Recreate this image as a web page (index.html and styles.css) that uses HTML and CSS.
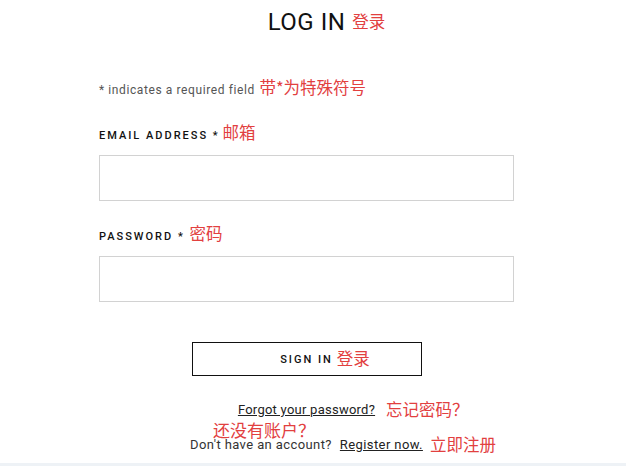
FILE: index.html
```html
<!DOCTYPE html>
<html lang="en">
<head>
    <meta charset="UTF-8">
    <meta name="viewport" content="width=device-width, initial-scale=1.0">
    <title>Log In</title>
    <link rel="stylesheet" href="styles.css">
</head>
<body>
    <div class="page">
        <h1 class="title"><span class="anchor">LOG IN<span class="cn cn-after title-cn">登录</span></span></h1>

        <form class="login-form" onsubmit="return false;">
            <p class="note">* indicates a required field <span class="cn">带*为特殊符号</span></p>

            <label class="field-label" for="email">EMAIL ADDRESS * <span class="cn">邮箱</span></label>
            <input class="field-input" type="email" id="email">

            <label class="field-label pw-label" for="password">PASSWORD * <span class="cn">密码</span></label>
            <input class="field-input" type="password" id="password">

            <div class="button-row">
                <button class="sign-in" type="submit"><span class="anchor">SIGN IN<span class="cn cn-after btn-cn">登录</span></span></button>
            </div>
        </form>

        <div class="links">
            <p class="forgot"><span class="anchor"><a href="#">Forgot your password?</a><span class="cn cn-after forgot-cn">忘记密码？</span></span></p>
            <p class="register"><span class="anchor"><span class="cn no-account">还没有账户？</span>Don't have an account?</span><span class="anchor register-link"><a href="#">Register now.</a><span class="cn cn-after register-cn">立即注册</span></span></p>
        </div>
    </div>
    <div class="bottom-band"></div>
</body>
</html>
```

FILE: styles.css
```css
body {
    margin: 0;
    background: #fff;
    font-family: Roboto, "Noto Sans", sans-serif;
    color: #222;
}
.page {
    width: 613px;
    height: 463px;
    overflow: hidden;
}
.anchor {
    position: relative;
    white-space: nowrap;
}
.cn {
    font-family: "Noto Sans CJK SC", sans-serif;
    font-size: 16.5px;
    font-weight: 400;
    letter-spacing: 0;
    color: #e2403f;
    line-height: 0;
}
.cn-after {
    position: absolute;
    left: 100%;
    line-height: 1;
    white-space: nowrap;
}
.title {
    margin: 0;
    padding-top: 8px;
    text-align: center;
    font-size: 24px;
    font-weight: 400;
    line-height: 28px;
    letter-spacing: 0.5px;
    color: #111;
}
.title-cn {
    margin-left: 7px;
    top: 5px;
}
.login-form {
    width: 415px;
    margin: 0 auto;
}
.note {
    margin: 46px 0 0;
    font-size: 12px;
    line-height: 16px;
    letter-spacing: 0.6px;
    color: #555;
}
.note .cn {
    margin-left: 1px;
}
.field-label {
    display: block;
    margin-top: 30px;
    font-size: 11px;
    font-weight: 500;
    line-height: 16px;
    letter-spacing: 2px;
    color: #111;
}
.field-label .cn {
    margin-left: -2px;
}
.pw-label {
    margin-top: 28px;
}
.pw-label .cn {
    margin-left: 0;
}
.field-input {
    display: block;
    width: 100%;
    height: 46px;
    margin-top: 11px;
    border: 1px solid #d2d2d2;
    box-sizing: border-box;
    font: inherit;
    outline: none;
}
.button-row {
    display: flex;
    justify-content: center;
    margin-top: 40px;
}
.sign-in {
    width: 230px;
    height: 34px;
    background: #fff;
    border: 1px solid #111;
    font-family: Roboto, sans-serif;
    font-size: 11px;
    font-weight: 500;
    letter-spacing: 2px;
    color: #111;
    cursor: pointer;
}
.btn-cn {
    margin-left: 4px;
    top: -3px;
}
.links {
    text-align: center;
    font-size: 13px;
    line-height: 16px;
    letter-spacing: 0.4px;
    color: #333;
}
.links p {
    margin: 0;
}
.links a {
    color: #222;
    text-decoration: underline;
}
.forgot {
    margin-top: 26px !important;
    letter-spacing: 0.25px;
}
.forgot-cn {
    margin-left: 11px;
    top: -1px;
}
.register {
    margin-top: 19px !important;
}
.register-link {
    margin-left: 8px;
}
.no-account {
    position: absolute;
    left: 23px;
    top: -16px;
    line-height: 1;
    font-size: 17px;
}
.register-cn {
    margin-left: 7px;
    top: -1px;
}
.bottom-band {
    height: 3px;
    background: #eef2f6;
}
```
